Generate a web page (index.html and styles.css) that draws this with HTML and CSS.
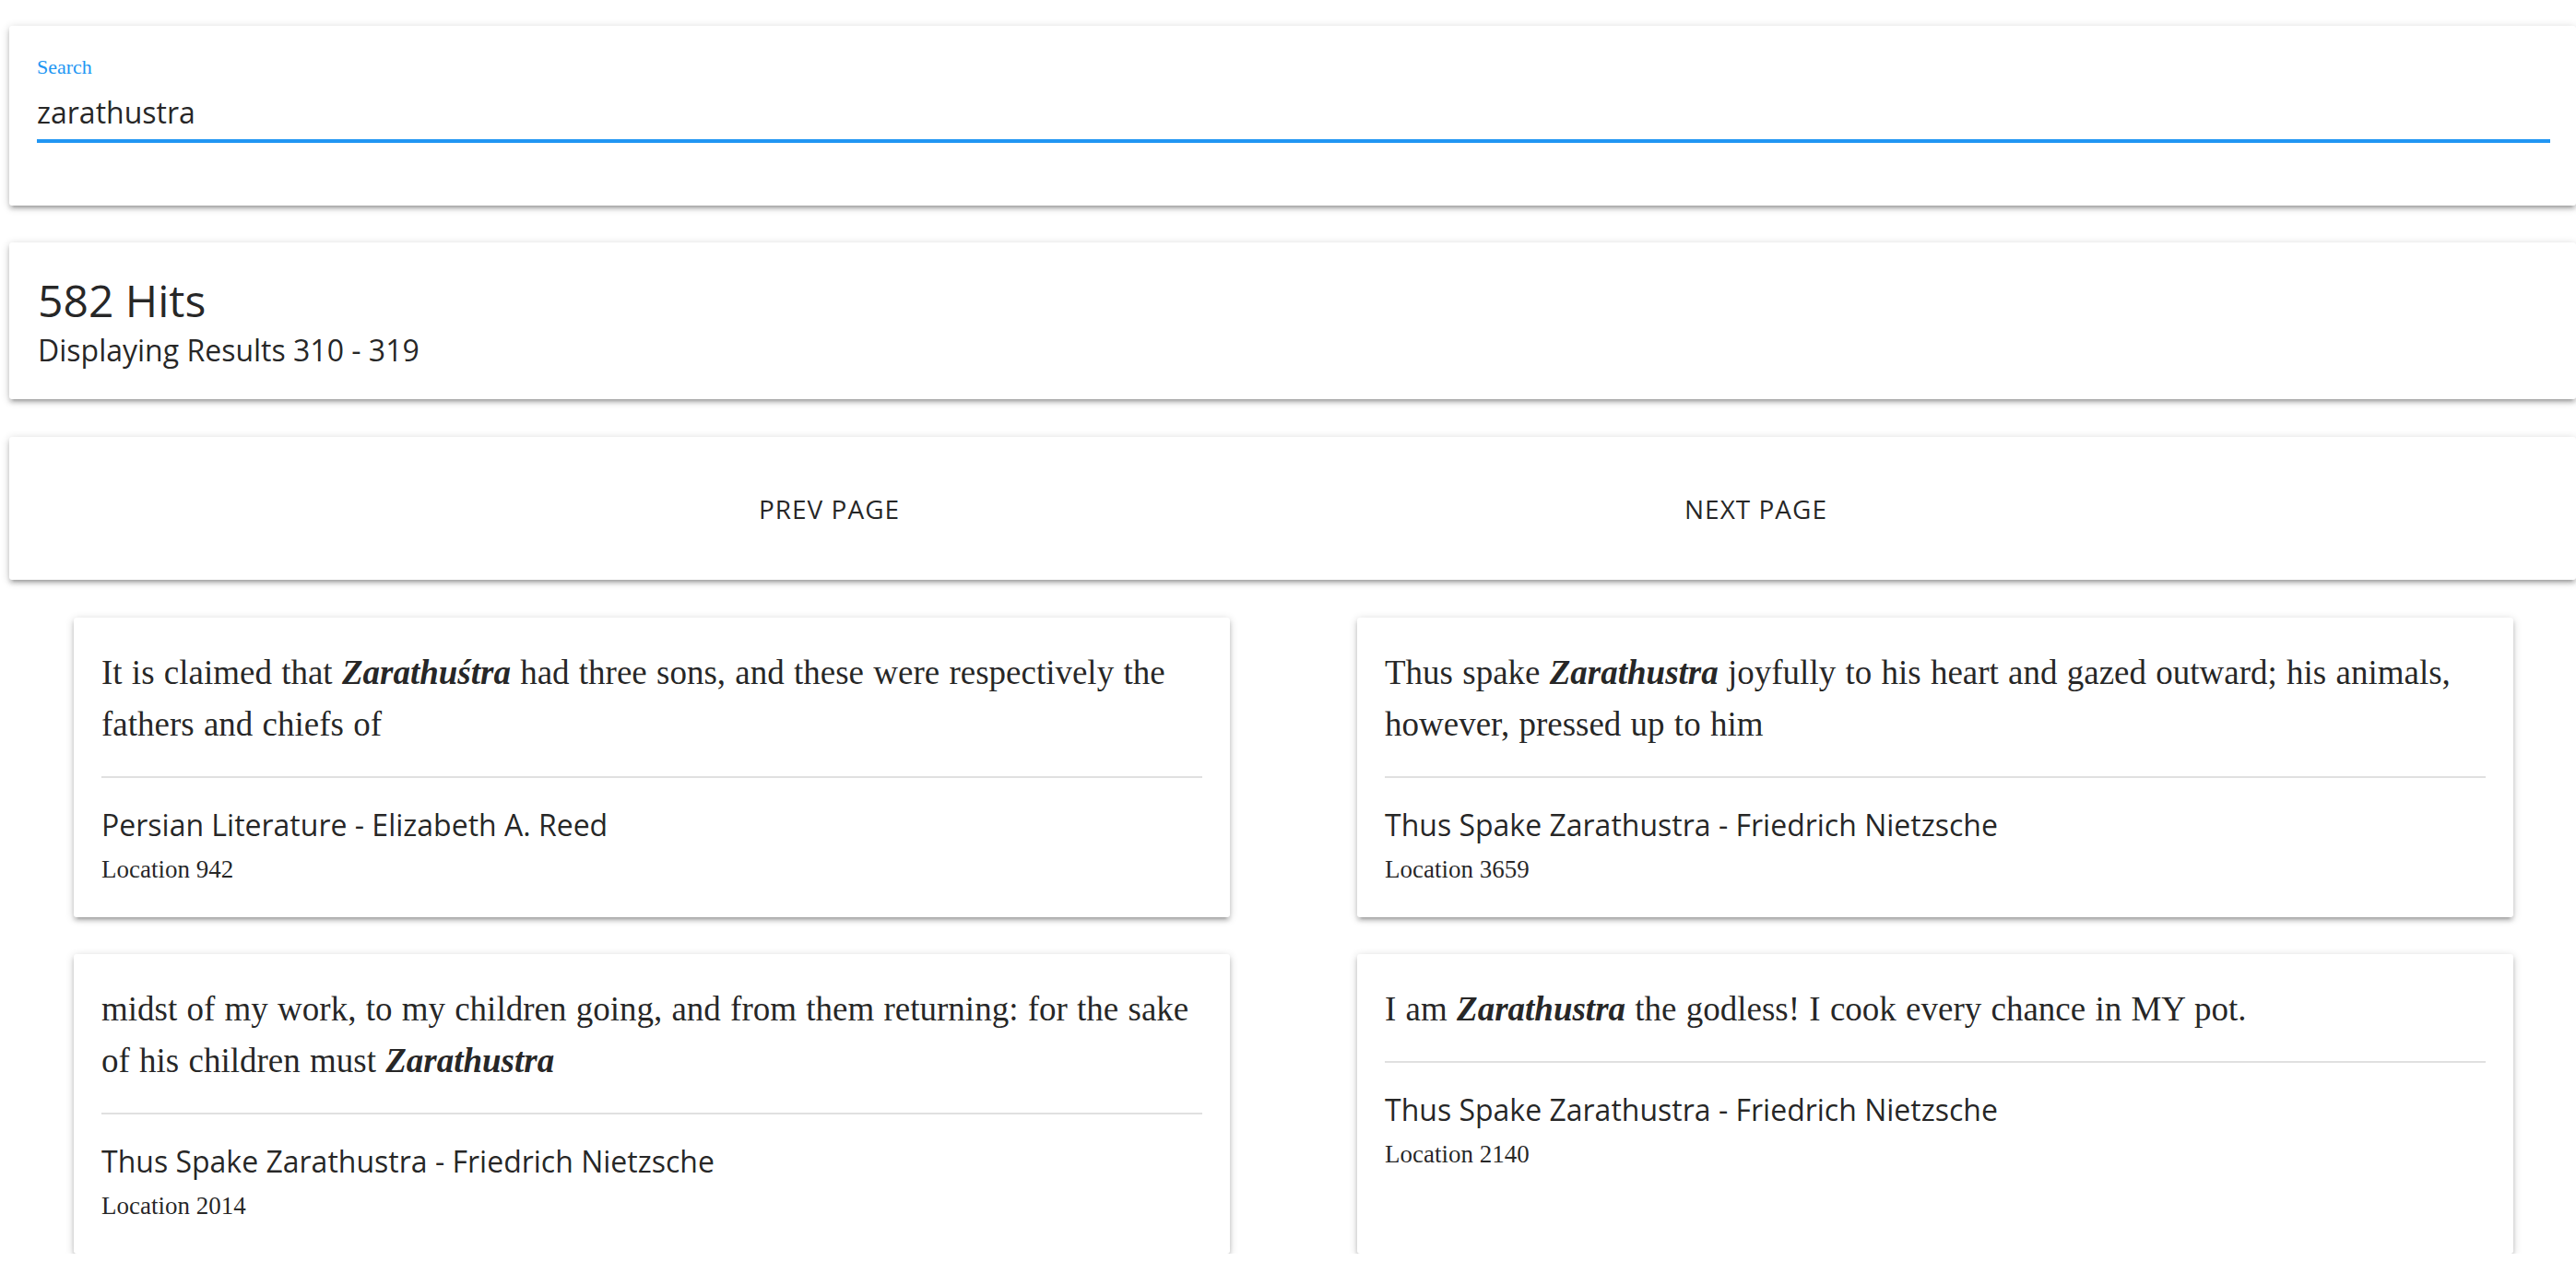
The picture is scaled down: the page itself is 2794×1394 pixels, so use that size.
FILE: index.html
```html
<!DOCTYPE html>
<html lang="en">
<head>
<meta charset="utf-8">
<title>Search</title>
<link rel="stylesheet" href="styles.css">
</head>
<body>
<div class="page">
  <section class="card search-card">
    <label class="search-label" for="q">Search</label>
    <input id="q" class="search-input" type="text" value="zarathustra">
  </section>

  <section class="card hits-card">
    <h2 class="hits-count">582 Hits</h2>
    <p class="hits-range">Displaying Results 310 - 319</p>
  </section>

  <section class="card pager-card">
    <div class="pager">
      <span class="pager-btn">Prev Page</span>
      <span class="pager-btn">Next Page</span>
    </div>
  </section>

  <div class="results">
    <article class="card result">
      <p class="quote">It is claimed that <b class="hl">Zarathuśtra</b> had three sons, and these were respectively the fathers and chiefs of</p>
      <hr class="divider">
      <p class="source">Persian Literature - Elizabeth A. Reed</p>
      <p class="location">Location 942</p>
    </article>
    <article class="card result">
      <p class="quote">Thus spake <b class="hl">Zarathustra</b> joyfully to his heart and gazed outward; his animals, however, pressed up to him</p>
      <hr class="divider">
      <p class="source">Thus Spake Zarathustra - Friedrich Nietzsche</p>
      <p class="location">Location 3659</p>
    </article>
    <article class="card result">
      <p class="quote">midst of my work, to my children going, and from them returning: for the sake of his children must <b class="hl">Zarathustra</b></p>
      <hr class="divider">
      <p class="source">Thus Spake Zarathustra - Friedrich Nietzsche</p>
      <p class="location">Location 2014</p>
    </article>
    <article class="card result">
      <p class="quote">I am <b class="hl">Zarathustra</b> the godless! I cook every chance in MY pot.</p>
      <hr class="divider">
      <p class="source">Thus Spake Zarathustra - Friedrich Nietzsche</p>
      <p class="location">Location 2140</p>
    </article>
  </div>
</div>
</body>
</html>
```

FILE: styles.css
```css
* { box-sizing: border-box; }

html, body {
  margin: 0;
  padding: 0;
  background: #ffffff;
}

body {
  font-family: "Open Sans", "Liberation Sans", sans-serif;
  color: rgba(0, 0, 0, 0.87);
}

.page {
  padding-top: 28px;
  display: flex;
  flex-direction: column;
}

.card {
  background: #ffffff;
  border-radius: 3px;
  box-shadow: 0 4px 4px 0 rgba(0, 0, 0, 0.14),
              0 6px 2px -4px rgba(0, 0, 0, 0.12),
              0 2px 10px 0 rgba(0, 0, 0, 0.2);
}

/* Search */
.search-card {
  margin-left: 10px;
  padding: 32px 28px 68px 30px;
  display: flex;
  flex-direction: column;
}

.search-label {
  font-family: "Liberation Serif", serif;
  font-size: 22px;
  line-height: normal;
  color: #2196f3;
}

.search-input {
  display: block;
  width: 100%;
  height: 56px;
  margin: 13px 0 0;
  padding: 0 0 8px;
  border: none;
  border-bottom: 4px solid #2196f3;
  outline: none;
  background: transparent;
  font-family: "Open Sans", sans-serif;
  font-size: 32px;
  color: rgba(0, 0, 0, 0.87);
}

/* Hits */
.hits-card {
  margin: 40px 0 0 10px;
  padding: 30px 28px 32px 31px;
}

.hits-count {
  margin: 0;
  font-size: 48px;
  font-weight: 400;
  line-height: normal;
}

.hits-range {
  margin: 0;
  font-size: 32px;
  line-height: normal;
}

/* Pager */
.pager-card {
  margin: 41px 0 0 10px;
  height: 155px;
  display: flex;
  justify-content: center;
  align-items: center;
}

.pager {
  width: 2010px;
  display: grid;
  grid-template-columns: 1fr 1fr;
}

.pager-btn {
  text-align: center;
  font-size: 28px;
  letter-spacing: 1px;
  text-transform: uppercase;
  line-height: 40px;
}

/* Results */
.results {
  margin-top: 41px;
  padding: 0 68px 0 80px;
  display: grid;
  grid-template-columns: 1fr 1fr;
  column-gap: 138px;
  row-gap: 40px;
}

.result {
  padding: 32px 30px 30px;
}

.quote {
  margin: 0;
  font-family: "Liberation Serif", serif;
  font-size: 37px;
  line-height: 56px;
  word-spacing: 1px;
}

.hl {
  font-weight: 700;
  font-style: italic;
}

.divider {
  margin: 28px 0 29px;
  border: none;
  height: 2px;
  background: #e0e0e0;
}

.source {
  margin: 0;
  font-size: 32px;
  line-height: normal;
}

.location {
  margin: 12px 0 6px;
  font-family: "Liberation Serif", serif;
  font-size: 27px;
  line-height: normal;
}
```
